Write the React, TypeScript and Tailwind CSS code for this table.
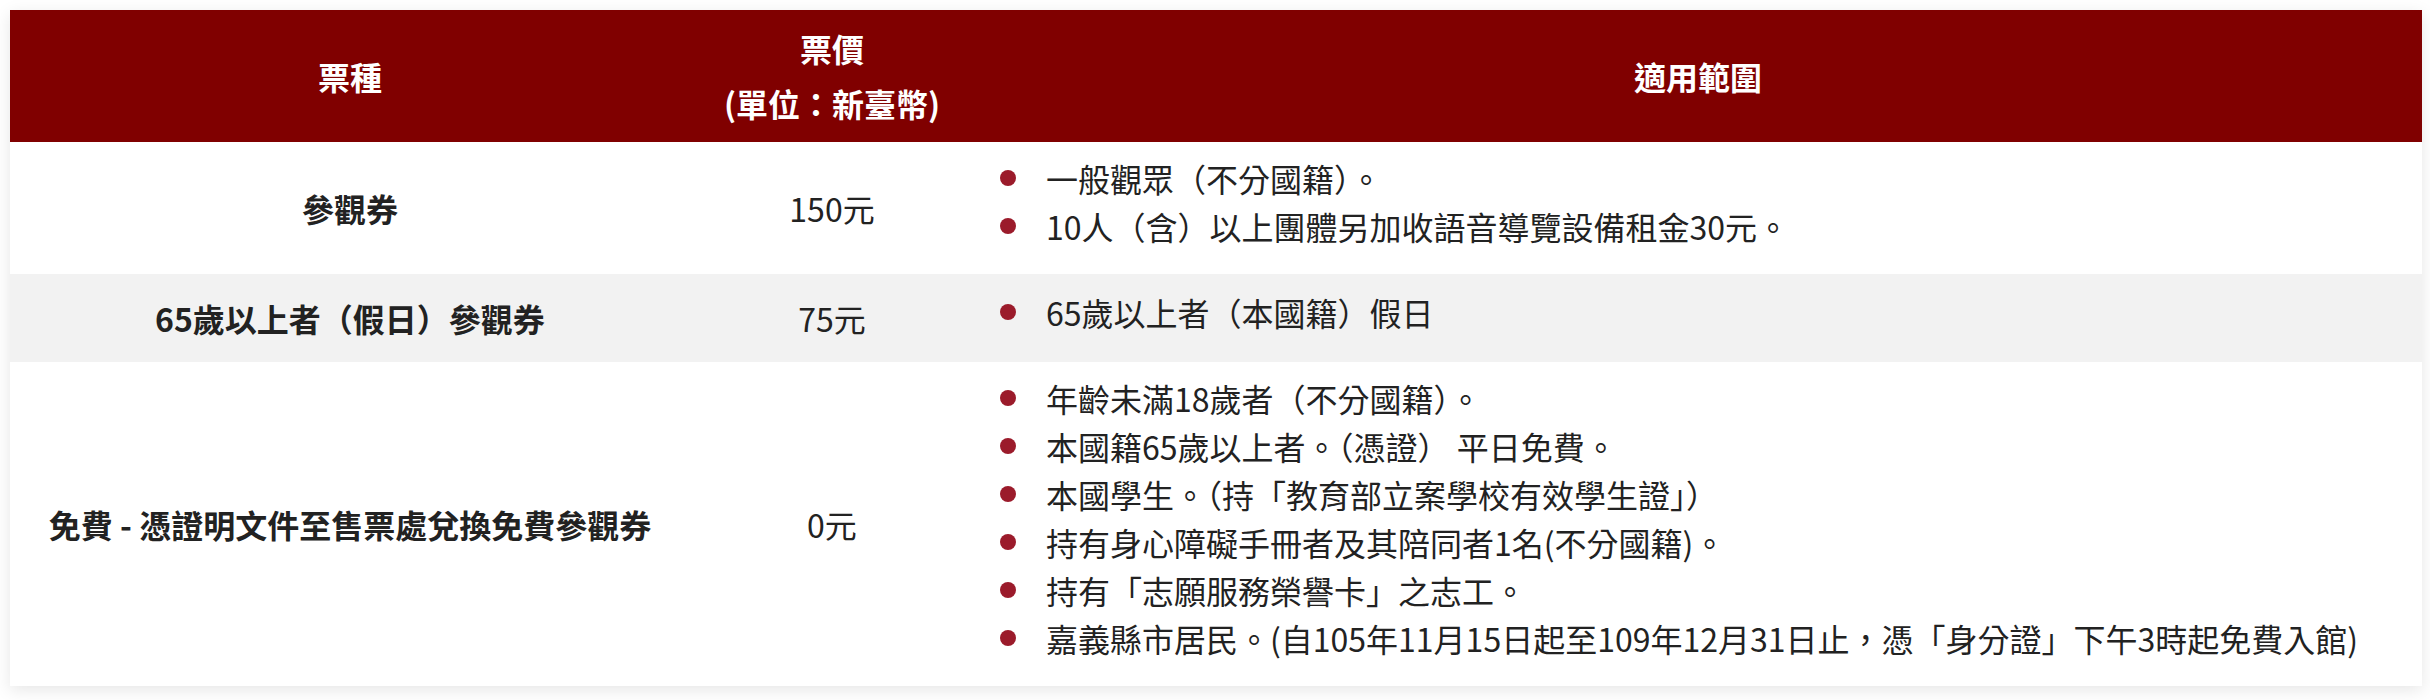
import React from 'react';

// ===== Types =====
interface TicketRow {
  name: string;
  price: string;
  scope: string[];
  shaded?: boolean;
}

// ===== Data =====
const rows: TicketRow[] = [
  {
    name: '參觀券',
    price: '150元',
    scope: ['一般觀眾（不分國籍）。', '10人（含）以上團體另加收語音導覽設備租金30元。'],
  },
  {
    name: '65歲以上者（假日）參觀券',
    price: '75元',
    scope: ['65歲以上者（本國籍）假日'],
    shaded: true,
  },
  {
    name: '免費 - 憑證明文件至售票處兌換免費參觀券',
    price: '0元',
    scope: [
      '年齡未滿18歲者（不分國籍）。',
      '本國籍65歲以上者。（憑證） 平日免費。',
      '本國學生。（持「教育部立案學校有效學生證」）',
      '持有身心障礙手冊者及其陪同者1名(不分國籍)。',
      '持有「志願服務榮譽卡」之志工。',
      '嘉義縣市居民。(自105年11月15日起至109年12月31日止，憑「身分證」下午3時起免費入館)',
    ],
  },
];

const TicketTable: React.FC = () => {
  return (
    <div className="ml-[10px] mt-[10px] w-[2412px] bg-white shadow-[0_4px_16px_rgba(0,0,0,0.1)]">
      {/* header */}
      <div className="grid grid-cols-[680px_284px_1fr] items-center bg-[#800000] text-white font-bold text-[32px] leading-[55px] h-[132px]">
        <div className="text-center">票種</div>
        <div className="text-center">
          票價
          <br />
          (單位：新臺幣)
        </div>
        <div className="text-center">適用範圍</div>
      </div>

      {rows.map((row) => (
        <div
          key={row.name}
          className={`grid grid-cols-[680px_284px_1fr] items-center text-[32px] leading-[48px] text-[#222] ${
            row.shaded ? 'bg-[#f2f2f2]' : 'bg-white'
          }`}
        >
          <div className="text-center font-bold py-[20px]">{row.name}</div>
          <div className="text-center">{row.price}</div>
          <ul className="pt-[12px] pb-[24px] pl-[26px]">
            {row.scope.map((item) => (
              <li key={item} className="flex items-center gap-[30px] whitespace-nowrap">
                <span className="w-[16px] h-[16px] rounded-full bg-[#9b1b2b] shrink-0" />
                <span>{item}</span>
              </li>
            ))}
          </ul>
        </div>
      ))}
    </div>
  );
};

export default function App() {
  return (
    <div className="min-h-[700px] bg-white pb-[14px] font-['Noto_Sans_CJK_TC','Noto_Sans',sans-serif]">
      <TicketTable />
    </div>
  );
}
